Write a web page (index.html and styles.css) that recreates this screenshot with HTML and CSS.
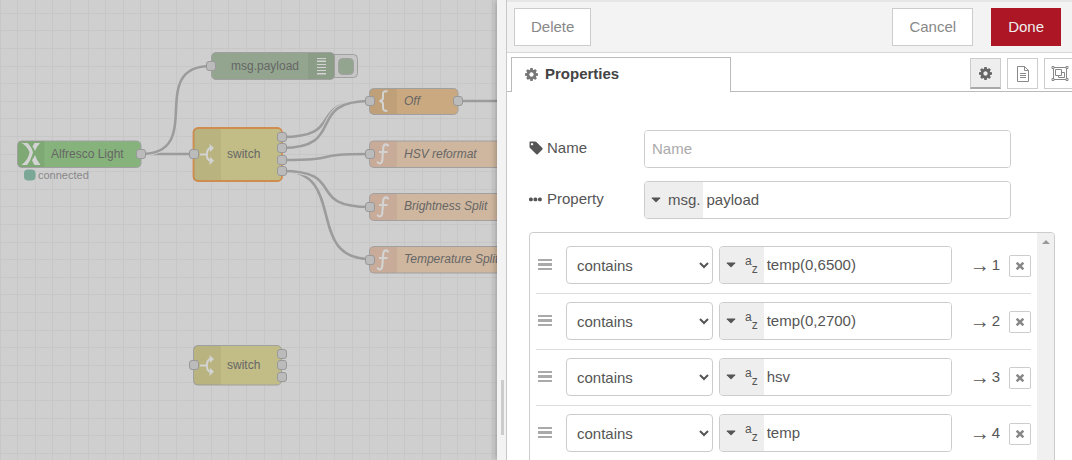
FILE: index.html
```html
<!DOCTYPE html>
<html lang="en">
<head>
<meta charset="utf-8">
<title>Edit switch node</title>
<link rel="stylesheet" href="styles.css">
</head>
<body>
<svg class="sprite" aria-hidden="true">
  <symbol id="cog" viewBox="0 128 1536 1536"><path d="M1024 896q0-106-75-181t-181-75-181 75-75 181 75 181 181 75 181-75 75-181zm512-109v222q0 12-8 23t-20 13l-185 28q-19 54-39 91 35 50 107 138 10 12 10 25t-9 23q-27 37-99 108t-94 71q-12 0-26-9l-138-108q-44 23-91 38-16 136-29 186-7 28-36 28h-222q-14 0-24.5-8.5t-11.5-21.5l-28-184q-49-16-90-37l-141 107q-10 9-25 9-14 0-25-11-126-114-165-168-7-10-7-23 0-12 8-23 15-21 51-66.5t54-70.5q-27-50-41-99l-183-27q-13-2-21-12.5t-8-23.5v-222q0-12 8-23t19-13l186-28q14-46 39-92-40-57-107-138-10-12-10-24 0-10 9-23 26-36 98.5-107.5t94.5-71.5q13 0 26 10l138 107q44-23 91-38 16-136 29-186 7-28 36-28h222q14 0 24.5 8.5t11.5 21.5l28 184q49 16 90 37l142-107q9-9 24-9 13 0 25 10 129 119 165 170 7 8 7 22 0 12-8 23-15 21-51 66.5t-54 70.5q26 50 41 98l183 28q13 2 21 12.5t8 23.5z"/></symbol>
  <symbol id="times" viewBox="110 366 1188 1188"><path d="M1298 1322q0 40-28 68l-136 136q-28 28-68 28t-68-28l-294-294-294 294q-28 28-68 28t-68-28l-136-136q-28-28-28-68t28-68l294-294-294-294q-28-28-28-68t28-68l136-136q28-28 68-28t68 28l294 294 294-294q28-28 68-28t68 28l136 136q28 28 28 68t-28 68l-294 294 294 294q28 28 28 68z"/></symbol>
  <symbol id="tag" viewBox="0 0 14 14"><path fill-rule="evenodd" d="M1.200.5h4.800q.8 0 1.400.6l6 6q.6.700 0 1.400l-4.700 4.700q-.7.600-1.400 0L1 6.900Q.5 6.400.5 5.700V1.200Q.5.500 1.200.5zM3 1.900a1.200 1.200 0 1 0 .01 0z"/></symbol>
  <symbol id="dots" viewBox="0 0 13 13"><rect x="0" y="4.500" width="3.800" height="3.800" rx="1.500"/><rect x="4.500" y="4.500" width="3.800" height="3.800" rx="1.500"/><rect x="9" y="4.500" width="3.800" height="3.800" rx="1.500"/></symbol>
  <symbol id="bars" viewBox="0 0 14 12"><path d="M0 0h14v2H0zM0 4h14v3H0zM0 9h14v2H0z"/></symbol>
  <symbol id="caret" viewBox="0 0 10 6"><path d="M1 .5h8q.6.100.2.700L5.500 5q-.5.400-1 0L.8 1.200Q.4.600 1 .5z"/></symbol>
  <symbol id="file" viewBox="0 0 14 16"><path fill="none" stroke="currentColor" d="M1.500.5h7l4 4v11h-11zM8.500.5v4h4M4 7.500h6M4 9.500h6M4 11.500h6"/></symbol>
  <symbol id="group" viewBox="0 0 18 16"><path fill="none" stroke="currentColor" d="M2.500 1.500h13v12h-13zM4.500 3.500h6v6h-6zM10.500 6.500h3v5h-6v-2"/><path class="corner" stroke="currentColor" d="M1 .5h2v2H1zM15 .5h2v2h-2zM1 12.500h2v2H1zM15 12.500h2v2h-2z"/></symbol>
  <symbol id="fork" viewBox="0 0 14 22"><path fill="none" stroke="currentColor" stroke-width="2" d="M0 11.500h6M11 5Q8 5.200 7.200 8.500 6.500 11.500 7.200 14.500 8 17.500 11 17.800"/><path d="M9.500 1L14 5 10 9zM10 13.800L14 17.800 9.500 22z"/></symbol>
  <symbol id="func" viewBox="0 0 14 22"><path fill="none" stroke="currentColor" stroke-width="2.100" d="M12.500 3.200Q11.500 1.200 9.500 1.400 7.500 1.800 7.200 5L6.300 17Q6 20.300 3.800 20.500 2 20.500 1.300 18.500M3 9h8.500"/></symbol>
  <symbol id="brace" viewBox="0 0 12 22"><path fill="none" stroke="currentColor" stroke-width="2" d="M10.500 1.200Q6 .8 6 4v4q0 2.600-3.500 3Q6 11.400 6 14v4q0 3.200 4.500 2.800"/></symbol>
  <symbol id="port" viewBox="0 0 10 10"><rect class="port" x=".5" y=".5" width="9" height="9" rx="2.500"/></symbol>
</svg>

<div class="editor">
  <main class="workspace">
    <svg class="canvas" role="img" aria-label="Flow">
      <path class="grid" d="M.5 0V2000M17.500 0V2000M35.500 0V2000M52.500 0V2000M70.500 0V2000M88.500 0V2000M105.500 0V2000M123.500 0V2000M140.500 0V2000M158.500 0V2000M176.500 0V2000M193.500 0V2000M211.500 0V2000M228.500 0V2000M246.500 0V2000M264.500 0V2000M281.500 0V2000M299.500 0V2000M316.500 0V2000M334.500 0V2000M352.500 0V2000M369.500 0V2000M387.500 0V2000M404.500 0V2000M422.500 0V2000M440.500 0V2000M457.500 0V2000M475.500 0V2000M492.500 0V2000"/>
      <path class="grid" d="M0 13.500H2000M0 30.500H2000M0 48.500H2000M0 66.500H2000M0 83.500H2000M0 101.500H2000M0 118.500H2000M0 136.500H2000M0 154.500H2000M0 171.500H2000M0 189.500H2000M0 206.500H2000M0 224.500H2000M0 242.500H2000M0 259.500H2000M0 277.500H2000M0 294.500H2000M0 312.500H2000M0 330.500H2000M0 347.500H2000M0 365.500H2000M0 382.500H2000M0 400.500H2000M0 418.500H2000M0 435.500H2000M0 453.500H2000"/>

      <path class="wire-edge" d="M141 154H194"/><path class="wire" d="M141 154H194"/>
      <path class="wire-edge" d="M141 154C207 154 145 66 211 66"/><path class="wire" d="M141 154C207 154 145 66 211 66"/>
      <path class="wire-edge" d="M282 137C348 137 304 101 370 101"/><path class="wire" d="M282 137C348 137 304 101 370 101"/>
      <path class="wire-edge" d="M282 148C348 148 304 101 370 101"/><path class="wire" d="M282 148C348 148 304 101 370 101"/>
      <path class="wire-edge" d="M282 160C348 160 304 154 370 154"/><path class="wire" d="M282 160C348 160 304 154 370 154"/>
      <path class="wire-edge" d="M282 171C348 171 304 259 370 259"/><path class="wire" d="M282 171C348 171 304 259 370 259"/>
      <path class="wire-edge" d="M282 171C348 171 304 207 370 207"/><path class="wire" d="M282 171C348 171 304 207 370 207"/>
      <path class="wire" d="M458 101H2000"/>

      <g class="node">
        <rect class="green" x="17.500" y="141" width="123.500" height="26.500" rx="4.500"/>
        <path class="shade" d="M18 141h26.500v26H18z"/>
        <path class="glyph" d="M21 143h6.500q4.500 4.500 5.500 9.500-2.500 8.500-6 12.500H21.500q7.500-6 8-13-2-5.500-8.500-9.500zM34.500 143H40q-3.500 4-5 8-1-3-2.500-4.500zM32 160q2-2.500 3-5 1.500 5 5.500 10h-6q-1.500-2-2.500-5z"/>
        <text x="51" y="158">Alfresco Light</text>
        <use href="#port" x="136" y="149" width="10" height="10"/>
        <rect class="status" x="24.500" y="170" width="10.500" height="10" rx="3"/>
        <text class="status-text" x="38" y="179">connected</text>
      </g>

      <g class="node">
        <rect class="button" x="330.500" y="54.500" width="27" height="23" rx="4"/>
        <rect class="sage" x="338.500" y="58.500" width="15" height="16" rx="4"/>
        <rect class="sage" x="211.500" y="52.500" width="123" height="27" rx="4.500"/>
        <path class="shade" d="M308 53h26.500v26H308z"/>
        <path class="glyph" d="M317 58h9v1h-9zM317 60.500h9v1.500h-9zM317 64h9v1h-9zM317 67h9v1h-9zM317 70h9v1h-9zM317 73h9v1.500h-9z"/>
        <text x="231" y="70">msg.payload</text>
        <use href="#port" x="206" y="61" width="10" height="10"/>
      </g>

      <g class="node">
        <rect class="khaki selected" x="193.500" y="128" width="88.500" height="53" rx="4.500"/>
        <path class="shade" d="M194 129h27v51h-27z"/>
        <use class="glyph" href="#fork" x="200" y="143" width="14" height="22"/>
        <text x="227" y="158">switch</text>
        <use href="#port" x="189" y="149" width="10" height="10"/>
        <use href="#port" x="277" y="132" width="10" height="10"/>
        <use href="#port" x="277" y="143" width="10" height="10"/>
        <use href="#port" x="277" y="155" width="10" height="10"/>
        <use href="#port" x="277" y="166" width="10" height="10"/>
      </g>

      <g class="node">
        <rect class="khaki" x="193.500" y="345.500" width="88" height="39.500" rx="4.500"/>
        <path class="shade" d="M194 346h27v39h-27z"/>
        <use class="glyph" href="#fork" x="200" y="354" width="14" height="22"/>
        <text x="227" y="369">switch</text>
        <use href="#port" x="189" y="360" width="10" height="10"/>
        <use href="#port" x="277" y="349" width="10" height="10"/>
        <use href="#port" x="277" y="360" width="10" height="10"/>
        <use href="#port" x="277" y="372" width="10" height="10"/>
      </g>

      <g class="node italic">
        <rect class="amber" x="369.500" y="88.500" width="88.500" height="26" rx="4.500"/>
        <path class="shade" d="M370 89h27v25h-27z"/>
        <use class="glyph" href="#brace" x="377" y="90" width="12" height="22"/>
        <text x="404" y="105">Off</text>
        <use href="#port" x="365" y="96" width="10" height="10"/>
        <use href="#port" x="453" y="96" width="10" height="10"/>
      </g>
      <g class="node italic">
        <rect class="peach" x="369.500" y="141" width="150" height="26.500" rx="4.500"/>
        <path class="shade rose" d="M370 141h27v26h-27z"/>
        <use class="glyph" href="#func" x="376" y="143" width="14" height="22"/>
        <text x="404" y="158">HSV reformat</text>
        <use href="#port" x="365" y="149" width="10" height="10"/>
      </g>
      <g class="node italic">
        <rect class="peach" x="369.500" y="193.500" width="150" height="27" rx="4.500"/>
        <path class="shade rose" d="M370 194h27v26h-27z"/>
        <use class="glyph" href="#func" x="376" y="196" width="14" height="22"/>
        <text x="404" y="210">Brightness Split</text>
        <use href="#port" x="365" y="202" width="10" height="10"/>
      </g>
      <g class="node italic">
        <rect class="peach" x="369.500" y="246.500" width="150" height="26.500" rx="4.500"/>
        <path class="shade rose" d="M370 247h27v26h-27z"/>
        <use class="glyph" href="#func" x="376" y="249" width="14" height="22"/>
        <text x="404" y="263">Temperature Split</text>
        <use href="#port" x="365" y="255" width="10" height="10"/>
      </g>
    </svg>
  </main>

  <div class="separator"><span class="grip"></span></div>

  <aside class="tray">
    <header class="tray-head">
      <button class="btn" type="button">Delete</button>
      <div class="confirm">
        <button class="btn" type="button">Cancel</button>
        <button class="btn primary" type="button">Done</button>
      </div>
    </header>

    <nav class="tabs">
      <button class="tab" type="button"><svg class="icon"><use href="#cog"/></svg>Properties</button>
      <div class="tab-tools">
        <button class="tool active" type="button" aria-label="Properties"><svg class="icon"><use href="#cog"/></svg></button>
        <button class="tool" type="button" aria-label="Description"><svg class="icon-file"><use href="#file"/></svg></button>
        <button class="tool" type="button" aria-label="Appearance"><svg class="icon-group"><use href="#group"/></svg></button>
      </div>
    </nav>

    <form class="form">
      <div class="field">
        <label for="name"><svg class="icon tag"><use href="#tag"/></svg>Name</label>
        <div class="box"><input id="name" class="name-input" type="text" placeholder="Name"></div>
      </div>
      <div class="field">
        <label for="property"><svg class="icon"><use href="#dots"/></svg>Property</label>
        <div class="box">
          <button class="type" type="button"><svg class="caret"><use href="#caret"/></svg>msg.</button>
          <input id="property" type="text" value="payload">
        </div>
      </div>

      <div class="rules">
        <ol class="rule-list">
          <li class="rule">
            <svg class="handle"><use href="#bars"/></svg>
            <select aria-label="Rule 1 operator"><option>contains</option></select>
            <div class="box"><button class="type" type="button" aria-label="String"><svg class="caret"><use href="#caret"/></svg><span class="az"><span>a</span><span class="low">z</span></span></button><input type="text" aria-label="Rule 1 value" value="temp(0,6500)"></div>
            <span class="output"><span class="arrow">→</span> 1</span>
            <button class="remove" type="button" aria-label="Remove rule 1"><svg><use href="#times"/></svg></button>
          </li>
          <li class="rule">
            <svg class="handle"><use href="#bars"/></svg>
            <select aria-label="Rule 2 operator"><option>contains</option></select>
            <div class="box"><button class="type" type="button" aria-label="String"><svg class="caret"><use href="#caret"/></svg><span class="az"><span>a</span><span class="low">z</span></span></button><input type="text" aria-label="Rule 2 value" value="temp(0,2700)"></div>
            <span class="output"><span class="arrow">→</span> 2</span>
            <button class="remove" type="button" aria-label="Remove rule 2"><svg><use href="#times"/></svg></button>
          </li>
          <li class="rule">
            <svg class="handle"><use href="#bars"/></svg>
            <select aria-label="Rule 3 operator"><option>contains</option></select>
            <div class="box"><button class="type" type="button" aria-label="String"><svg class="caret"><use href="#caret"/></svg><span class="az"><span>a</span><span class="low">z</span></span></button><input type="text" aria-label="Rule 3 value" value="hsv"></div>
            <span class="output"><span class="arrow">→</span> 3</span>
            <button class="remove" type="button" aria-label="Remove rule 3"><svg><use href="#times"/></svg></button>
          </li>
          <li class="rule">
            <svg class="handle"><use href="#bars"/></svg>
            <select aria-label="Rule 4 operator"><option>contains</option></select>
            <div class="box"><button class="type" type="button" aria-label="String"><svg class="caret"><use href="#caret"/></svg><span class="az"><span>a</span><span class="low">z</span></span></button><input type="text" aria-label="Rule 4 value" value="temp"></div>
            <span class="output"><span class="arrow">→</span> 4</span>
            <button class="remove" type="button" aria-label="Remove rule 4"><svg><use href="#times"/></svg></button>
          </li>
        </ol>
        <div class="scrollbar"><span class="scroll-up"></span></div>
      </div>
    </form>
  </aside>
</div>
</body>
</html>
```

FILE: styles.css
```css
* { box-sizing: border-box; }

body {
  margin: 0;
  overflow: hidden;
  background: #fff;
  color: #555;
  font: 15px/20px "Liberation Sans", Arial, sans-serif;
}

button, input, select { font: inherit; color: inherit; }
button { padding: 0; }
svg { flex: none; fill: currentColor; }
.sprite { display: none; }

.editor {
  display: grid;
  grid-template-columns: minmax(0, 497fr) 10px minmax(0, 565fr);
  height: 100vh;
}

/* Flow canvas */
.workspace { background: #cfcfcf; overflow: hidden; }
.canvas { display: block; width: 100%; height: 100%; }
.grid { fill: none; stroke: #c7c7c7; }
.wire { fill: none; stroke: #9c9c9c; stroke-width: 2.6; }
.wire-edge { fill: none; stroke: #cfcfcf; stroke-width: 4.4; }
.node rect { stroke: #a0a0a0; }
.node text { fill: #666; font-size: 12px; }
.node .status-text { fill: #888; font-size: 11px; }
.italic text { font-style: italic; }
.node .status { fill: #7ba797; stroke: #7ba797; }
.green { fill: #86b37b; }
.sage { fill: #93a58f; }
.khaki { fill: #c2bd86; }
.amber { fill: #caa980; }
.peach { fill: #cfb79f; }
.button { fill: #c6c6c6; }
.node .selected { stroke: #d08c4e; stroke-width: 1.8; }
.shade { fill: rgba(0, 0, 0, 0.05); }
.rose { fill: rgba(185, 150, 140, 0.3); }
.glyph { fill: #d3d3d3; color: #d3d3d3; }
.port { fill: #bbb; stroke: #999; stroke-width: 1; }

/* Tray edge */
.separator {
  display: flex;
  align-items: flex-end;
  justify-content: center;
  padding: 0 0 25px 2px;
  background: #f3f3f3;
  border-right: 1px solid #c8c8c8;
  box-shadow: 0 0 7px rgba(0, 0, 0, 0.35);
  clip-path: inset(0 0 0 -10px);
}
.grip { width: 3px; height: 55px; background: #ccc; }

/* Tray */
.tray { min-width: 0; overflow: hidden; background: #fff; }
.tray-head {
  display: flex;
  justify-content: space-between;
  align-items: center;
  height: 53px;
  padding: 2px 11px 0 7px;
  background: #f3f3f3;
  border-bottom: 1px solid #d6d6d6;
  box-shadow: inset 0 2px #e6e6e6;
}
.confirm { display: flex; gap: 18px; }
.btn {
  height: 38px;
  padding: 0 16px;
  background: #fff;
  border: 1px solid #ccc;
  color: #888;
}
.primary { background: #ad1625; border-color: #ad1625; color: #eee; }

.tabs {
  display: flex;
  justify-content: space-between;
  padding: 4px 0 0 4px;
  background: linear-gradient(#bbb, #bbb) bottom / 100% 1px no-repeat;
}
.tab {
  display: flex;
  align-items: center;
  gap: 7px;
  width: 220px;
  height: 35px;
  padding: 0 0 2px 13px;
  background: #fff;
  border: 1px solid #bbb;
  border-bottom: 0;
  color: #444;
  font-weight: bold;
}
.icon { width: 13px; height: 13px; }
.tab .icon { color: #777; }
.tab-tools { display: flex; gap: 6px; margin: 1px -3px 0 0; }
.tool {
  display: flex;
  align-items: center;
  justify-content: center;
  width: 31px;
  height: 31px;
  background: #fff;
  border: 1px solid #ccc;
  color: #888;
}
.active { background: #eee; border-bottom: 2px solid #aaa; color: #666; }
.icon-file { width: 14px; height: 16px; }
.icon-group { width: 18px; height: 16px; }
.corner { fill: #fff; }

/* Form */
.form { padding: 38px 17px 0 22px; }
.field {
  display: grid;
  grid-template-columns: 115px minmax(0, 1fr);
  align-items: center;
  margin: 0 44px 13px 0;
}
.field label { display: flex; align-items: center; gap: 5px; padding-bottom: 2px; }
.tag { width: 14px; height: 14px; margin-right: -1px; }
.box {
  display: flex;
  height: 38px;
  min-width: 0;
  overflow: hidden;
  border: 1px solid #ccc;
  border-radius: 4px;
}
.box input {
  flex: 1;
  min-width: 0;
  padding: 0 4px;
  background: #fff;
  border: 0;
  outline: 0;
}
.box .name-input { padding: 0 7px; }
.name-input::placeholder { color: #aaa; }
.type {
  display: flex;
  align-items: center;
  gap: 7px;
  padding: 0 2px 0 6px;
  background: #eee;
  border: 0;
}
.caret { width: 10px; height: 6px; }

/* Rule list */
.rules {
  display: flex;
  margin-top: 13px;
  border: 1px solid #ccc;
  border-radius: 4px;
  overflow: hidden;
}
.rule-list { flex: 1; min-width: 0; margin: 0; padding: 5px 6px; list-style: none; }
.rule {
  display: flex;
  align-items: center;
  height: 56px;
  padding: 0 0 1px 2px;
  border-bottom: 1px solid #ddd;
}
.handle { width: 14px; height: 12px; margin-right: 14px; color: #aaa; }
.rule select {
  flex: none;
  width: 147px;
  height: 38px;
  margin-right: 6px;
  padding: 0 2px 0 6px;
  background-color: #fff;
  border: 1px solid #ccc;
  border-radius: 4px;
}
.rule .box { flex: 1; }
.rule .box input { padding: 0 3px; }
.rule .type { gap: 9px; padding-right: 6px; }
.az { display: flex; height: 20px; font-size: 12px; line-height: 12px; }
.low { align-self: flex-end; }
.output {
  display: flex;
  align-items: center;
  justify-content: flex-end;
  gap: 2px;
  width: 57px;
  padding-right: 9px;
  white-space: nowrap;
}
.arrow { font-size: 20px; }
.remove {
  display: flex;
  align-items: center;
  justify-content: center;
  width: 22px;
  height: 22px;
  margin-top: 2px;
  background: #fff;
  border: 1px solid #ccc;
  border-radius: 2px;
  color: #888;
}
.remove svg { width: 8px; height: 8px; }
.scrollbar {
  display: flex;
  justify-content: center;
  width: 17px;
  padding-top: 7px;
  background: #f0f0f0;
}
.scroll-up {
  width: 0;
  height: 0;
  border: 4px solid transparent;
  border-top: 0;
  border-bottom-color: #999;
}
```
